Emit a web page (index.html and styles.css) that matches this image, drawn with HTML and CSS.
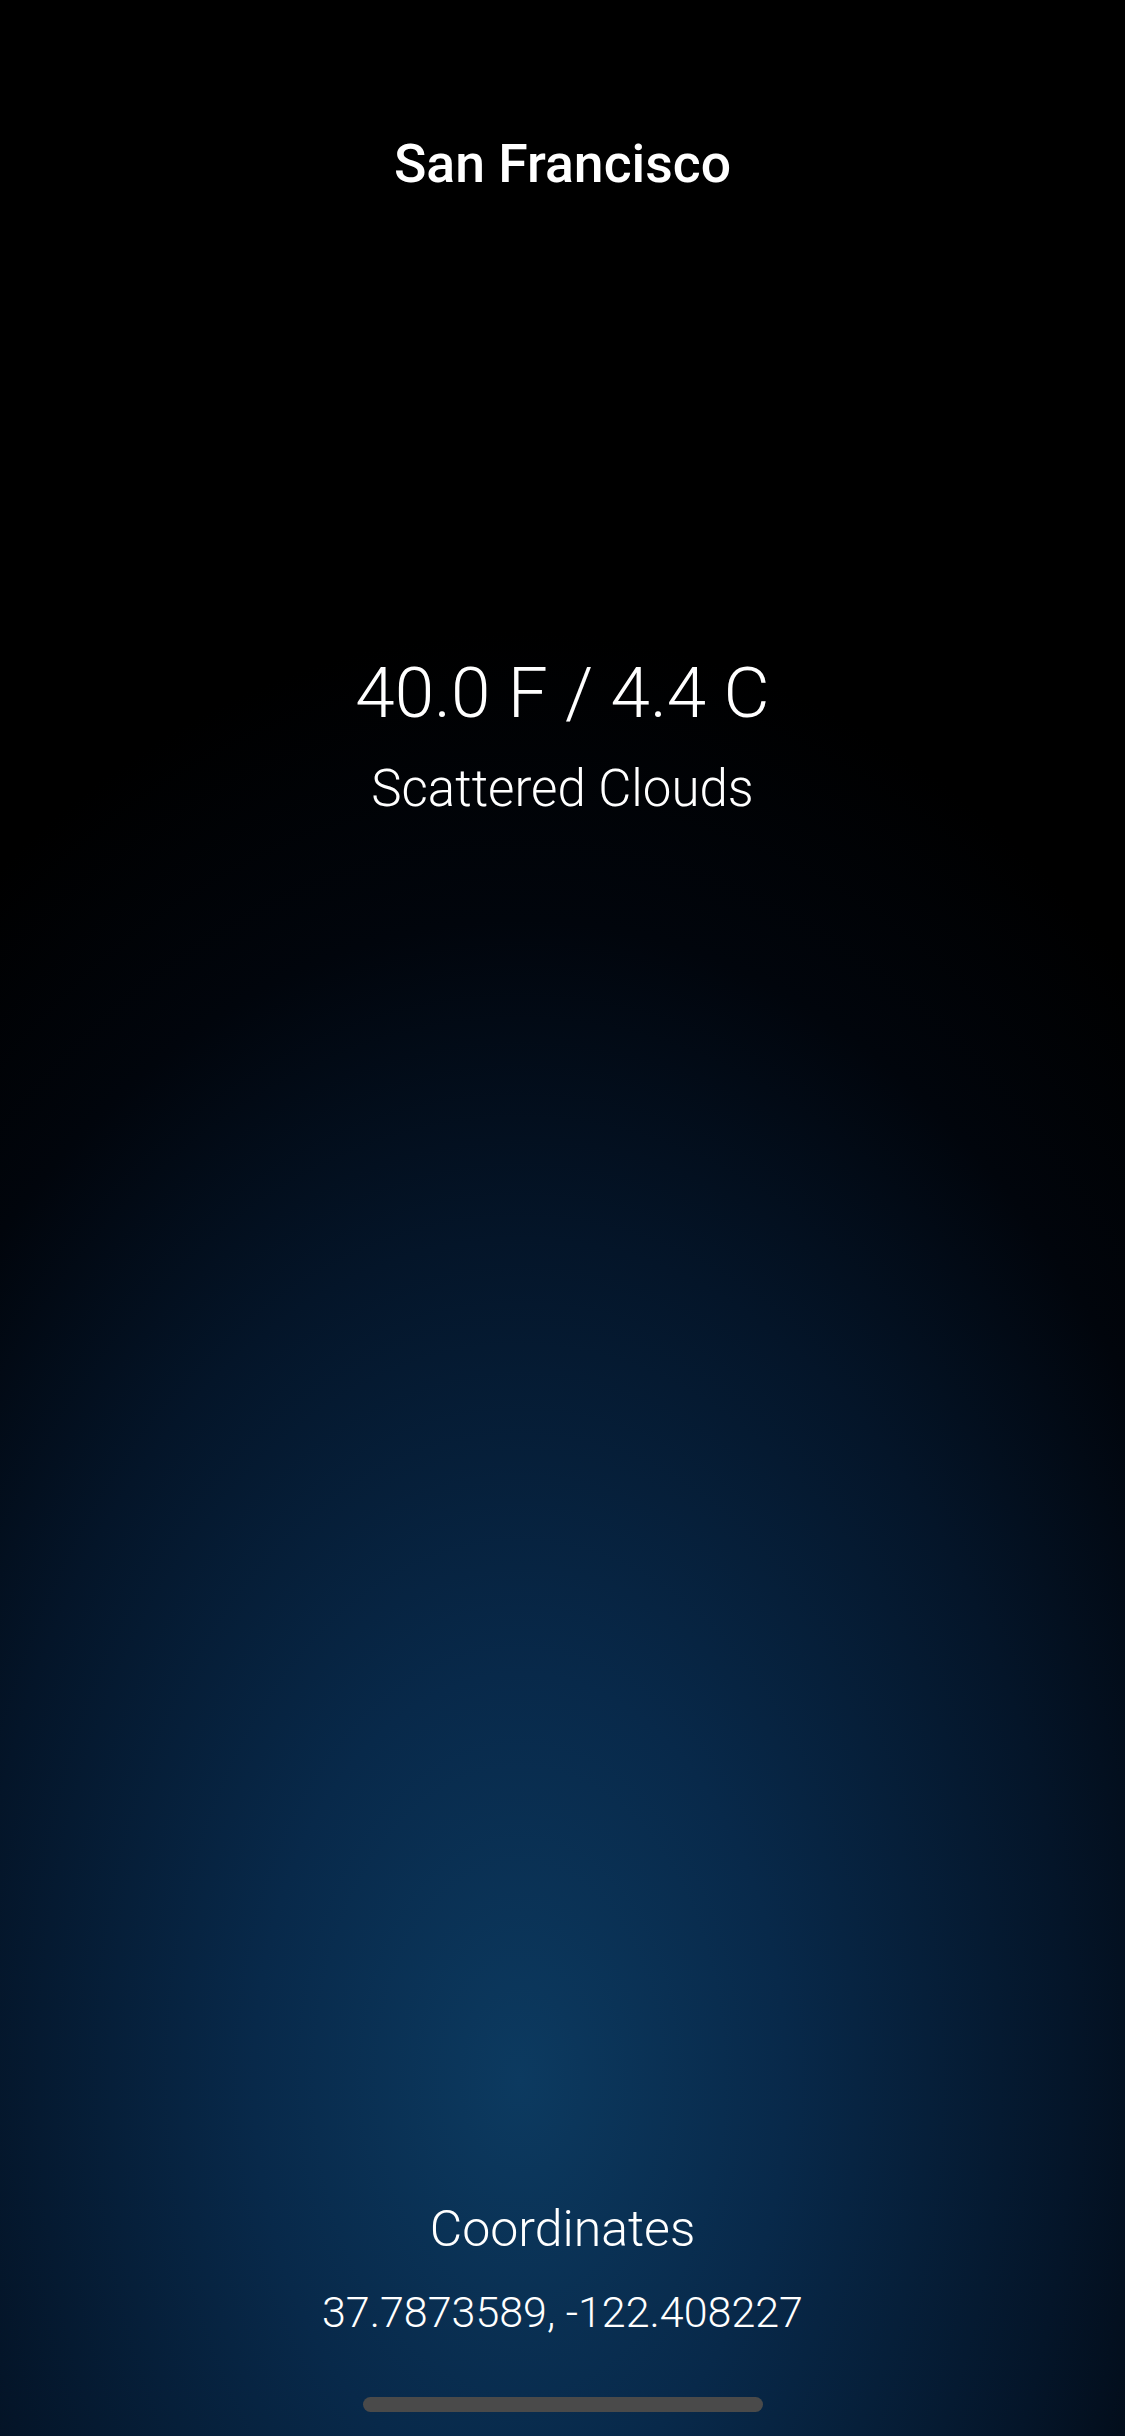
FILE: index.html
```html
<!DOCTYPE html>
<html>
<head>
<meta charset="utf-8">
<link rel="stylesheet" href="styles.css">
</head>
<body>
<div class="screen">
  <h1 class="city">San Francisco</h1>
  <div class="weather">
    <div class="temp">40.0 F / 4.4 C</div>
    <div class="desc">Scattered Clouds</div>
  </div>
  <div class="coords">
    <div class="coords-label">Coordinates</div>
    <div class="coords-value">37.7873589, -122.408227</div>
  </div>
  <div class="home-indicator"></div>
</div>
</body>
</html>
```

FILE: styles.css
```css
html, body {
  margin: 0;
  padding: 0;
  background: #000;
}
.screen {
  width: 1125px;
  height: 2436px;
  display: flex;
  flex-direction: column;
  align-items: center;
  color: #fff;
  font-family: Roboto, "Liberation Sans", sans-serif;
  background:
    radial-gradient(ellipse 950px 1450px at 520px 2080px, #0c3a60 0%, #08294a 28%, #041529 58%, #01050c 80%, rgba(0,0,0,0) 100%),
    #000;
}
.city {
  margin: 133px 0 0;
  font-size: 53.5px;
  line-height: 62px;
  font-weight: 500;
}
.weather {
  margin-top: 456px;
  display: flex;
  flex-direction: column;
  align-items: center;
}
.temp {
  font-size: 71px;
  font-weight: 300;
  line-height: 84px;
}
.desc {
  font-size: 51px;
  font-weight: 300;
  line-height: 60px;
  margin-top: 24px;
}
.coords {
  margin-top: auto;
  display: flex;
  flex-direction: column;
  align-items: center;
}
.coords-label {
  font-size: 50px;
  font-weight: 300;
  line-height: 60px;
}
.coords-value {
  font-size: 43px;
  font-weight: 300;
  line-height: 50px;
  margin-top: 28px;
}
.home-indicator {
  width: 400px;
  height: 15px;
  border-radius: 8px;
  background: #4a4a4a;
  margin: 60px 0 24px;
}
```
